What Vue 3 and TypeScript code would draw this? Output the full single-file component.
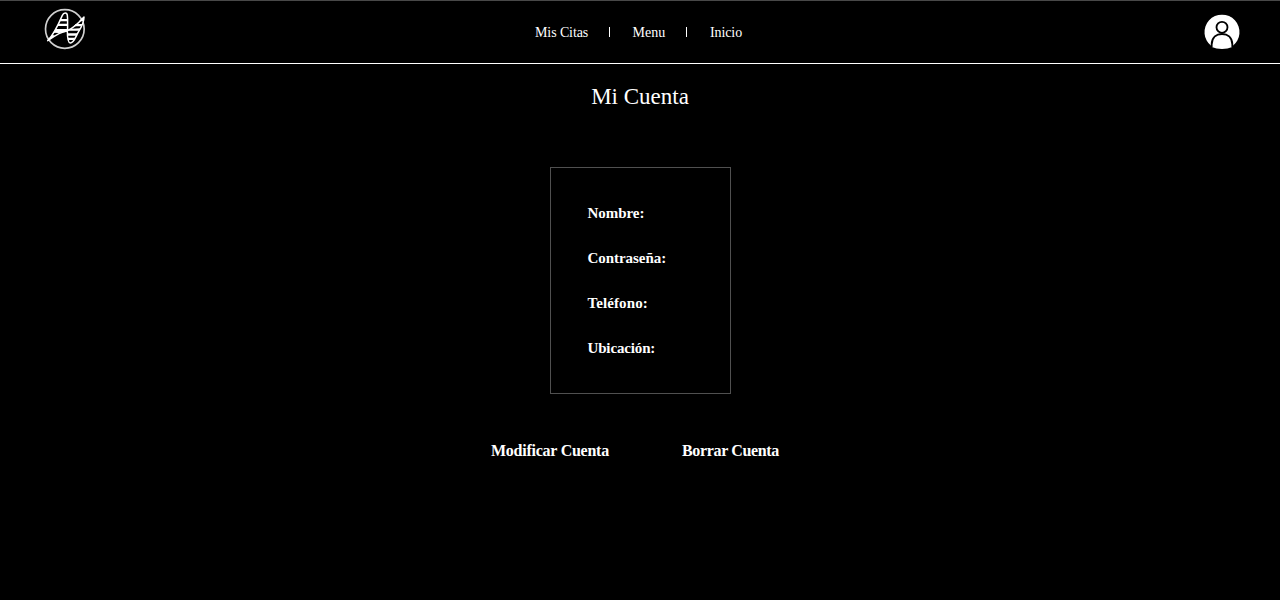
<script setup lang="ts">
const links: string[] = ['Mis Citas', 'Menu', 'Inicio']
const fields: string[] = ['Nombre:', 'Contraseña:', 'Teléfono:', 'Ubicación:']
</script>

<template>
  <div class="page">
    <header class="header">
      <svg class="logo" viewBox="0 0 180 180" aria-hidden="true">
        <circle cx="89.5" cy="87" r="58" fill="none" stroke="#d0d0d0" stroke-width="5" />
        <g fill="#000" stroke="#fff" stroke-width="4.5" stroke-linejoin="round">
          <path d="M38 122 C58 102 70 74 82 46 C86 37 96 36 97 46 C99 60 97 76 98 92 C78 94 60 106 38 122Z" />
          <path d="M97 92 C116 84 132 68 147 51 C147 68 138 84 129 98 C121 113 116 129 106 129 C97 128 97 108 97 92Z" />
        </g>
        <g fill="#fff">
          <path d="M77 57H97V64H74ZM70 71H97V78H67ZM62 87H98V95L72 99L54 98Z" />
          <path d="M36 124L53 104L60 108Z" />
          <path d="M98 89L110 86L136 85L132 92H98ZM98 100H128L124 107H98ZM98 113H120L116 120H99ZM122 72H142L138 79H116ZM138 57L147 51L145 64H132Z" />
        </g>
      </svg>
      <nav class="nav">
        <template v-for="(link, i) in links" :key="link">
          <span v-if="i > 0" class="sep"></span>
          <a class="link" :class="`link-${i}`">{{ link }}</a>
        </template>
      </nav>
      <svg class="avatar" viewBox="0 0 180 180" aria-label="Perfil">
        <path d="M49 138 A52.5 52.5 0 1 1 113 138 Z" fill="#fff" />
        <path d="M50 141 V133 C51 112 64 102 81 102 C98 102 111 112 112 133 V141 Q98 147 81 147 Q64 147 50 141Z" fill="#fff" />
        <path d="M50 142 V133 C51 112 64 102 81 102 C98 102 111 112 112 133 V142" fill="none" stroke="#000" stroke-width="5.5" />
        <circle cx="81" cy="82" r="16.5" fill="#fff" stroke="#000" stroke-width="5.5" />
      </svg>
    </header>
    <main class="main">
      <h1 class="title">Mi Cuenta</h1>
      <section class="card">
        <p v-for="(field, i) in fields" :key="field" class="field" :class="`field-${i}`">{{ field }}</p>
      </section>
      <div class="actions">
        <a class="modify">Modificar Cuenta</a>
        <a class="remove">Borrar Cuenta</a>
      </div>
    </main>
  </div>
</template>

<style>
body { background: #000; }
</style>

<style scoped>
.page {
  height: 600px;
  box-sizing: border-box;
  overflow: hidden;
  background: #000;
  color: #fff;
  font-family: "Liberation Serif", "Times New Roman", serif;
}
.header {
  height: 64px;
  box-sizing: border-box;
  border-top: 1px solid #484848;
  border-bottom: 1px solid #fff;
  display: grid;
  grid-template-columns: 1fr auto 1fr;
}
.logo, .avatar { width: 60px; height: 60px; margin-top: -1px; }
.logo { margin-left: 35px; }
.avatar { justify-self: end; margin-right: 25px; }
.nav {
  display: flex;
  align-items: center;
  height: 62px;
  font-size: 14px;
  line-height: 16px;
  margin-right: 3px;
}
.link { box-sizing: border-box; white-space: nowrap; padding-top: 2px; }
.link-0 { width: 53px; letter-spacing: -0.1px; }
.link-1 { width: 32px; }
.link-2 { width: 33px; padding-left: 1px; letter-spacing: -0.1px; }
.sep { width: 1px; height: 10px; margin: 0 22.5px 0 21px; background: #fff; }
.main { display: flex; flex-direction: column; align-items: center; }
.title { margin: 20px 0 0; font-size: 23px; line-height: 26px; font-weight: 400; }
.card {
  width: 181px;
  height: 227px;
  box-sizing: border-box;
  margin-top: 57px;
  padding: 37px 0 0 37px;
  border: 1px solid #505050;
}
.field { margin: 0 0 28px; font-size: 15px; line-height: 17px; font-weight: 700; }
.field-0, .field-1 { letter-spacing: -0.05px; }
.field-2 { letter-spacing: 0.1px; }
.field-3 { letter-spacing: -0.15px; }
.actions {
  display: flex;
  gap: 73px;
  width: 298px;
  margin-top: 48px;
  font-size: 16px;
  line-height: 18px;
  font-weight: 700;
  letter-spacing: -0.25px;
  white-space: nowrap;
}
.modify { width: 118px; }
.remove { letter-spacing: -0.35px; }
</style>
